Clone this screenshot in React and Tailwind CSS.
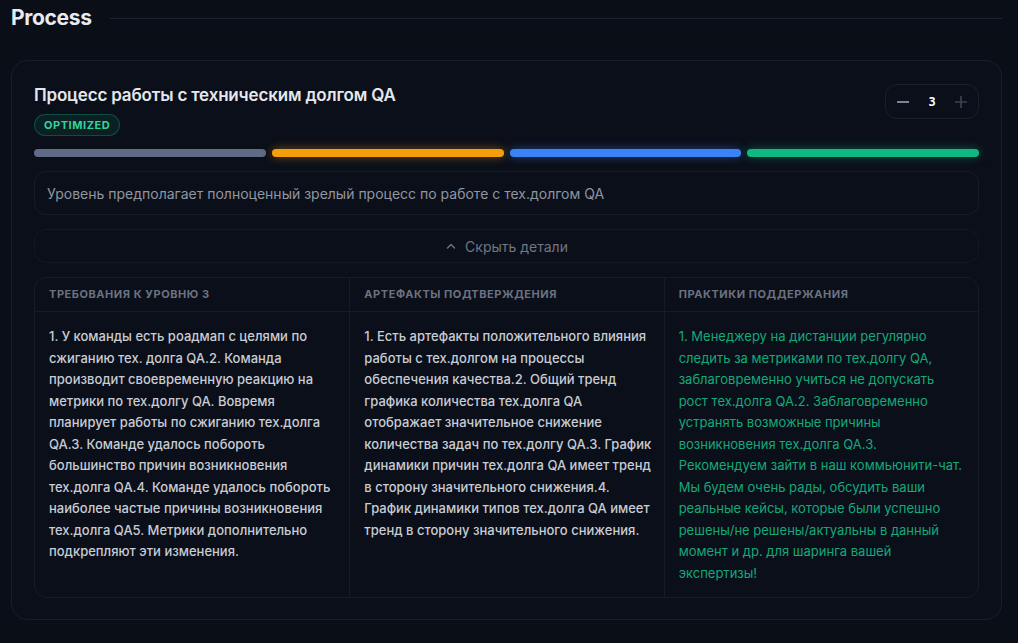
import React, { useState } from 'react';

const columns = [
  {
    title: 'Требования к уровню 3',
    tone: 'text-[#c8ccd4] font-medium pr-2',
    text: '1. У команды есть роадмап с целями по сжиганию тех. долга QA.2. Команда производит своевременную реакцию на метрики по тех.долгу QA. Вовремя планирует работы по сжиганию тех.долга QA.3. Команде удалось побороть большинство причин возникновения тех.долга QA.4. Команде удалось побороть наиболее частые причины возникновения тех.долга QA5. Метрики дополнительно подкрепляют эти изменения.',
  },
  {
    title: 'Артефакты подтверждения',
    tone: 'text-[#c8ccd4] font-medium pr-2',
    text: '1. Есть артефакты положительного влияния работы с тех.долгом на процессы обеспечения качества.2. Общий тренд графика количества тех.долга QA отображает значительное снижение количества задач по тех.долгу QA.3. График динамики причин тех.долга QA имеет тренд в сторону значительного снижения.4. График динамики типов тех.долга QA имеет тренд в сторону значительного снижения.',
  },
  {
    title: 'Практики поддержания',
    tone: 'text-[#14a97a] font-normal pr-3',
    text: '1. Менеджеру на дистанции регулярно следить за метриками по тех.долгу QA, заблаговременно учиться не допускать рост тех.долга QA.2. Заблаговременно устранять возможные причины возникновения тех.долга QA.3. Рекомендуем зайти в наш коммьюнити-чат. Мы будем очень рады, обсудить ваши реальные кейсы, которые были успешно решены/не решены/актуальны в данный момент и др. для шаринга вашей экспертизы!',
  },
];

const bars = [
  'bg-[#5f6b85]',
  'bg-[#f59e0b] shadow-[0_0_10px_rgba(245,158,11,0.45)]',
  'bg-[#3b82f6] shadow-[0_0_10px_rgba(59,130,246,0.45)]',
  'bg-[#10b981] shadow-[0_0_10px_rgba(16,185,129,0.45)]',
];

export default function App() {
  const [level, setLevel] = useState(3);
  const [open, setOpen] = useState(true);

  return (
    <div className="min-h-[643px] bg-[#0a0e17] pl-[11px] pr-4 font-['Inter',sans-serif] antialiased">
      <div className="flex items-center gap-[18px] h-9">
        <h2 className="text-[21px] font-bold text-[#e8eaee] tracking-[-0.015em]">Process</h2>
        <div className="flex-1 h-px bg-[#1c2230]" />
      </div>

      <div className="mt-6 rounded-2xl border border-[#191e2a] bg-[#0b0f19] px-[22px] pt-5 pb-[21px]">
        <div className="flex items-start justify-between">
          <div>
            <h3 className="text-[17px] leading-7 font-semibold text-[#e5e7eb] tracking-[-0.01em]">
              Процесс работы с техническим долгом QA
            </h3>
            <span className="mt-[5px] inline-flex h-[22px] items-center rounded-full border border-[#10b981]/30 bg-[#10b981]/10 px-[9px] text-[11px] font-bold tracking-[0.05em] text-[#34d399]">
              OPTIMIZED
            </span>
          </div>
          <div className="mt-[3px] flex h-[35px] w-[94px] items-center justify-between rounded-xl border border-[#1a1f2b] px-[10px]">
            <button onClick={() => setLevel(Math.max(0, level - 1))} className="text-[#9aa1ae]">
              <svg width="14" height="14" viewBox="0 0 14 14"><path d="M1 7h12" stroke="currentColor" strokeWidth="1.6" /></svg>
            </button>
            <span className="font-['DejaVu_Sans_Mono',monospace] text-[12px] font-bold text-white">{level}</span>
            <button className="text-[#3d4452]">
              <svg width="14" height="14" viewBox="0 0 14 14"><path d="M1 7h12M7 1v12" stroke="currentColor" strokeWidth="1.6" /></svg>
            </button>
          </div>
        </div>

        <div className="mt-[13px] grid grid-cols-4 gap-[6px]">
          {bars.map((b, i) => (
            <div key={i} className={`h-2 rounded-full ${b}`} />
          ))}
        </div>

        <div className="mt-[14px] flex h-11 items-center rounded-xl border border-[#161b26] px-3 text-[14px] text-[#8f95a1]">
          Уровень предполагает полноценный зрелый процесс по работе с тех.долгом QA
        </div>

        <button
          onClick={() => setOpen(!open)}
          className="mt-[14px] flex h-[34px] w-full items-center justify-center gap-2 rounded-xl border border-[#131824] text-[14px] text-[#6f7684]"
        >
          <svg width="12" height="12" viewBox="0 0 12 12" fill="none">
            <path d="M2.5 8l3.5-3.5L9.5 8" stroke="currentColor" strokeWidth="1.4" strokeLinecap="round" strokeLinejoin="round" />
          </svg>
          Скрыть детали
        </button>

        {open && (
          <div className="mt-[14px] grid grid-cols-3 overflow-hidden rounded-xl border border-[#161b26]">
            {columns.map((c, i) => (
              <div key={c.title} className={`flex flex-col ${i > 0 ? 'border-l border-[#161b26]' : ''}`}>
                <div className="flex h-[34px] items-center border-b border-[#161b26] px-3.5 text-[11px] font-bold uppercase tracking-[0.05em] text-[#6b7280]">
                  {c.title}
                </div>
                <p className={`pl-3.5 pt-[14px] pb-[13px] text-[13px] leading-[21.5px] ${c.tone}`}>
                  {c.text}
                </p>
              </div>
            ))}
          </div>
        )}
      </div>
    </div>
  );
}
